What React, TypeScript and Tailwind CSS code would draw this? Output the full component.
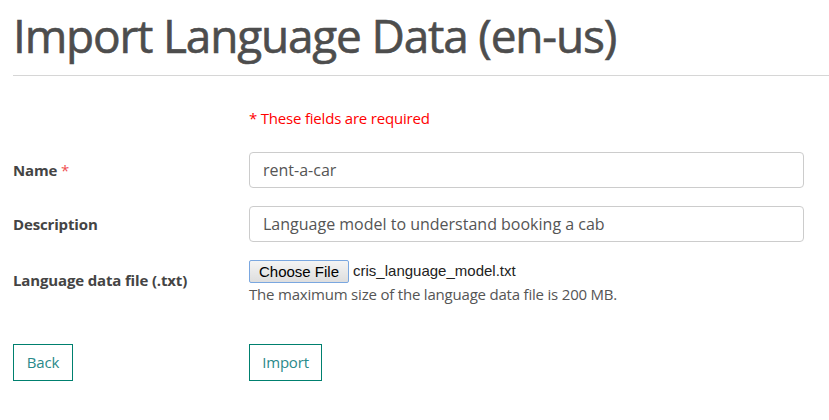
export default function App() {
  return (
    <div className="min-h-[420px] w-[829px] bg-white font-['Open_Sans',sans-serif] text-[#555]">
      <div className="pl-[13px]">
        <h1 className="pt-[3px] text-[46px] font-normal leading-[64px] tracking-[-1.2px] text-[#4d4d4d] [-webkit-text-stroke:0.6px_#4d4d4d]">
          Import Language Data (en-us)
        </h1>
        <hr className="mt-[8px] border-t border-[#d6d6d6]" />
      </div>

      <form className="pl-[13px] pr-[25px]">
        <div className="grid grid-cols-[236px_1fr]">
          <div />
          <p className="mt-[32px] text-[15px] leading-[20px] tracking-[-0.2px] text-[#ff0000]">
            * These fields are required
          </p>
        </div>

        <div className="mt-[24px] grid grid-cols-[236px_1fr] items-center">
          <label className="text-[15px] font-bold tracking-[-0.15px] text-[#444]">
            Name <span className="font-normal text-[#f05050]">*</span>
          </label>
          <input
            type="text"
            defaultValue="rent-a-car"
            className="h-[36px] w-full rounded-[4px] border border-[#cccccc] px-[13px] text-[16px] text-[#555] outline-none"
          />
        </div>

        <div className="mt-[18px] grid grid-cols-[236px_1fr] items-center">
          <label className="text-[15px] font-bold tracking-[-0.15px] text-[#444]">Description</label>
          <input
            type="text"
            defaultValue="Language model to understand booking a cab"
            className="h-[36px] w-full rounded-[4px] border border-[#cccccc] px-[13px] text-[16px] text-[#555] outline-none"
          />
        </div>

        <div className="mt-[18px] grid grid-cols-[236px_1fr]">
          <label className="pt-[9px] text-[15px] font-bold tracking-[-0.15px] text-[#444]">
            Language data file (.txt)
          </label>
          <div>
            <div className="flex items-center">
              <button
                type="button"
                className="h-[23px] rounded-[2px] border border-[#7aa7e0] bg-gradient-to-b from-[#f4f4f4] to-[#dedede] px-[9px] font-['Liberation_Sans',sans-serif] text-[15px] leading-[20px] text-black"
              >
                Choose File
              </button>
              <span className="ml-[4px] font-['Liberation_Sans_Narrow','Liberation_Sans',sans-serif] text-[15px] text-[#222]">
                cris_language_model.txt
              </span>
            </div>
            <p className="mt-[1px] text-[15px] leading-[20px] tracking-[-0.2px] text-[#555]">
              The maximum size of the language data file is 200 MB.
            </p>
          </div>
        </div>

        <div className="mt-[40px] grid grid-cols-[236px_1fr]">
          <div>
            <button
              type="button"
              className="h-[37px] w-[60px] border border-[#00806f] text-[15px] tracking-[-0.2px] text-[#2a8a8a]"
            >
              Back
            </button>
          </div>
          <div>
            <button
              type="button"
              className="h-[37px] w-[73px] border border-[#00806f] text-[15px] tracking-[-0.2px] text-[#2a8a8a]"
            >
              Import
            </button>
          </div>
        </div>
      </form>
    </div>
  );
}
